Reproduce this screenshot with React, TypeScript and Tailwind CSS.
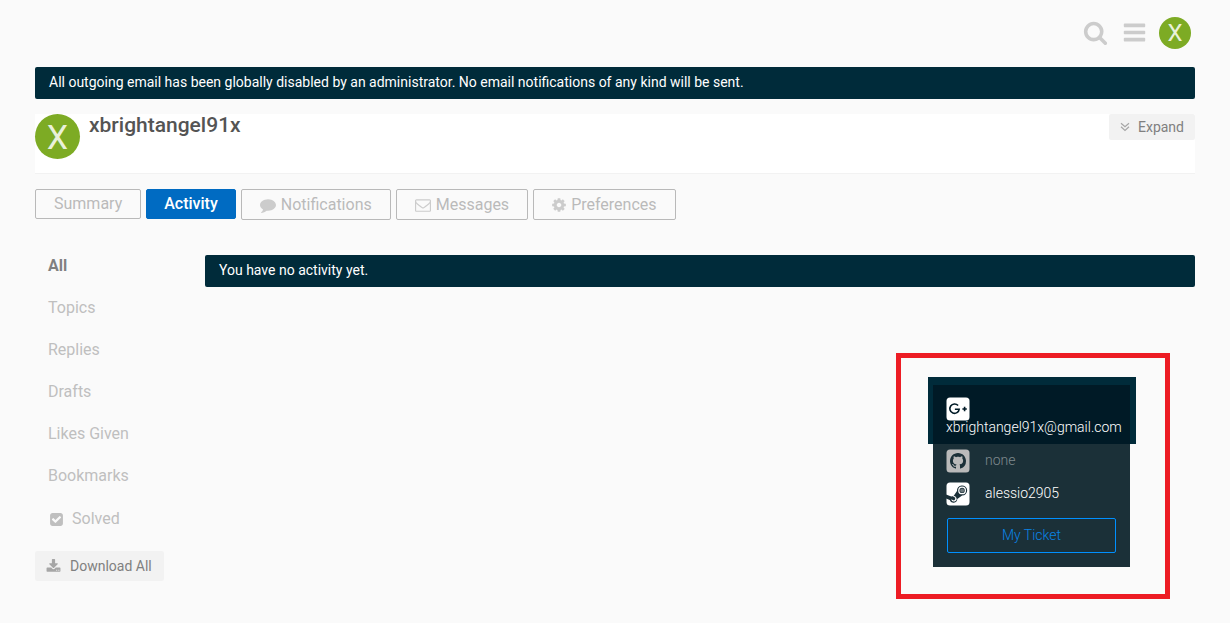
import React from "react";

const paths = {
  search: "M1216 832q0-185-131.5-316.5t-316.5-131.5-316.5 131.5-131.5 316.5 131.5 316.5 316.5 131.5 316.5-131.5 131.5-316.5zm512 832q0 52-38 90t-90 38q-54 0-90-38l-343-342q-179 124-399 124-143 0-273.5-55.5t-225-150-150-225-55.5-273.5 55.5-273.5 150-225 225-150 273.5-55.5 273.5 55.5 225 150 150 225 55.5 273.5q0 220-124 399l343 343q37 37 37 90z",
  bars: "M1664 1344v128q0 26-19 45t-45 19h-1408q-26 0-45-19t-19-45v-128q0-26 19-45t45-19h1408q26 0 45 19t19 45zm0-512v128q0 26-19 45t-45 19h-1408q-26 0-45-19t-19-45v-128q0-26 19-45t45-19h1408q26 0 45 19t19 45zm0-512v128q0 26-19 45t-45 19h-1408q-26 0-45-19t-19-45v-128q0-26 19-45t45-19h1408q26 0 45 19t19 45z",
  comment: "M1792 896q0 174-120 321.5t-326 233-450 85.5q-70 0-145-8-198 175-460 242-49 14-114 22-17 2-30.5-9t-17.5-29v-1q-3-4-.5-12t2-10 4.5-9.5l6-9 7-8.5 8-9q7-8 31-34.5t34.5-38 31-39.5 32.5-51 27-59 26-76q-157-89-247.5-220t-90.5-281q0-130 71-248.5t191-204.5 286-136.5 348-50.5q244 0 450 85.5t326 233 120 321.5z",
  envelope: "M1664 1504v-768q-32 36-69 66-268 206-426 338-51 43-83 67t-86.5 48.5-102.5 24.5h-2q-48 0-102.5-24.5t-86.5-48.5-83-67q-158-132-426-338-37-30-69-66v768q0 13 9.5 22.5t22.5 9.5h1472q13 0 22.5-9.5t9.5-22.5zm0-1051v-24.5l-.5-13-3-12.5-5.5-9-9-7.5-14-2.5h-1472q-13 0-22.5 9.5t-9.5 22.5q0 168 147 284 193 152 401 317 6 5 35 29.5t46 37.5 44.5 31.5 50.5 27.5 43 9h2q20 0 43-9t50.5-27.5 44.5-31.5 46-37.5 35-29.5q208-165 401-317 54-43 100.5-115.5t46.5-131.5zm128-37v1088q0 66-47 113t-113 47h-1472q-66 0-113-47t-47-113v-1088q0-66 47-113t113-47h1472q66 0 113 47t47 113z",
  cog: "M1152 896q0-106-75-181t-181-75-181 75-75 181 75 181 181 75 181-75 75-181zm512-109v222q0 12-8 23t-20 13l-185 28q-19 54-39 91 35 50 107 138 10 12 10 25t-9 23q-27 37-99 108t-94 71q-12 0-26-9l-138-108q-44 23-91 38-16 136-29 186-7 28-36 28h-222q-14 0-24.5-8.5t-11.5-21.5l-28-184q-49-16-90-37l-141 107q-10 9-25 9-14 0-25-11-126-114-165-168-7-10-7-23 0-12 8-23 15-21 51-66.5t54-70.5q-27-50-41-99l-183-27q-13-2-21-12.5t-8-23.5v-222q0-12 8-23t19-13l186-28q14-46 39-92-40-57-107-138-10-12-10-24 0-10 9-23 26-36 98.5-107.5t94.5-71.5q13 0 26 10l138 107q44-23 91-38 16-136 29-186 7-28 36-28h222q14 0 24.5 8.5t11.5 21.5l28 184q49 16 90 37l142-107q9-9 24-9 13 0 25 10 129 119 165 170 7 8 7 22 0 12-8 23-15 21-51 66.5t-54 70.5q26 50 41 98l183 28q13 2 21 12.5t8 23.5z",
  check: "M813 1299l614-614q19-19 19-45t-19-45l-102-102q-19-19-45-19t-45 19l-467 467-211-211q-19-19-45-19t-45 19l-102 102q-19 19-19 45t19 45l358 358q19 19 45 19t45-19zm851-883v960q0 119-84.5 203.5t-203.5 84.5h-960q-119 0-203.5-84.5t-84.5-203.5v-960q0-119 84.5-203.5t203.5-84.5h960q119 0 203.5 84.5t84.5 203.5z",
  download: "M1344 1344q0-26-19-45t-45-19-45 19-19 45 19 45 45 19 45-19 19-45zm256 0q0-26-19-45t-45-19-45 19-19 45 19 45 45 19 45-19 19-45zm128-224v320q0 40-28 68t-68 28h-1472q-40 0-68-28t-28-68v-320q0-40 28-68t68-28h465l135 136q58 56 136 56t136-56l136-136h464q40 0 68 28t28 68zm-325-569q17 41-14 70l-448 448q-18 19-45 19t-45-19l-448-448q-31-29-14-70 17-39 59-39h256v-448q0-26 19-45t45-19h256q26 0 45 19t19 45v448h256q42 0 59 39z"
};

interface IconProps {
  name: keyof typeof paths;
  size: number;
  className?: string;
}
const Icon: React.FC<IconProps> = ({
  name,
  size,
  className
}) => <svg width={size} height={size} viewBox="0 0 1792 1792" fill="currentColor" overflow="visible" aria-hidden="true" className={className}>
    <path d={paths[name]} />
  </svg>;

const GooglePlusIcon = () => <svg width={24} height={24} viewBox="0 0 24 24" aria-hidden="true">
    <rect x="0.5" y="0.5" width="23" height="23" rx="3.5" fill="#fff" />
    <path d="M12.1 8.6A4.7 4.7 0 1 0 13.2 12.2H8.9M16.4 12h4.4M18.6 9.8v4.4" fill="none" stroke="#001a26" strokeWidth="1.6" />
  </svg>;

const GithubIcon = () => <svg width={24} height={24} viewBox="0 0 24 24" aria-hidden="true">
    <rect x="0.5" y="0.5" width="23" height="23" rx="3.5" fill="#bababa" />
    <path transform="translate(4 4)" fill="#1b3038" d="M8 0C3.58 0 0 3.58 0 8c0 3.54 2.29 6.53 5.47 7.59.4.07.55-.17.55-.38 0-.19-.01-.82-.01-1.49-2.01.37-2.53-.49-2.69-.94-.09-.23-.48-.94-.82-1.13-.28-.15-.68-.52-.01-.53.63-.01 1.08.58 1.23.82.72 1.21 1.87.87 2.33.66.07-.52.28-.87.51-1.07-1.78-.2-3.64-.89-3.64-3.95 0-.87.31-1.59.82-2.15-.08-.2-.36-1.02.08-2.12 0 0 .67-.21 2.2.82.64-.18 1.32-.27 2-.27s1.36.09 2 .27c1.53-1.04 2.2-.82 2.2-.82.44 1.1.16 1.92.08 2.12.51.56.82 1.27.82 2.15 0 3.07-1.87 3.75-3.65 3.95.29.25.54.73.54 1.48 0 1.07-.01 1.93-.01 2.2 0 .21.15.46.55.38A8.01 8.01 0 0 0 16 8c0-4.42-3.58-8-8-8z" />
  </svg>;

const SteamIcon = () => <svg width={24} height={24} viewBox="0 0 24 24" aria-hidden="true">
    <rect x="0.5" y="0.5" width="23" height="23" rx="3.5" fill="#fff" />
    <path d="M0 12.4l5.3 2.2a3.9 3.9 0 0 1 2.3-.6l3.4-4.9a5.1 5.1 0 1 1 5.1 4.5l-4.8 3.5a3.9 3.9 0 0 1-7.6 1L0 16.5z" fill="#1b3038" />
    <circle cx="16.1" cy="8.4" r="3.3" fill="none" stroke="#fff" strokeWidth="1.3" />
    <circle cx="16.1" cy="8.4" r="2" fill="#6d797d" />
    <path d="M5.2 17.3l1.6.7a1.6 1.6 0 1 0 1.2-2.9l-1.5-.6a2.7 2.7 0 1 1-1.3 2.8z" fill="#fff" />
  </svg>;

const tabs: { label: string; icon?: keyof typeof paths }[] = [
  { label: "Summary" },
  { label: "Activity" },
  { label: "Notifications", icon: "comment" },
  { label: "Messages", icon: "envelope" },
  { label: "Preferences", icon: "cog" }
];

const filters = ["All", "Topics", "Replies", "Drafts", "Likes Given", "Bookmarks"];

interface AlertProps {
  children: React.ReactNode;
}
const Alert: React.FC<AlertProps> = ({ children }) => <div className="rounded-[2px] bg-[#002b3a] px-[14px] pb-0.5 text-sm leading-[30px] text-white">
    {children}
  </div>;

const Header = () => <header className="flex items-center justify-end h-[65px] mb-0.5 pr-1">
    <button aria-label="Search" className="mr-[14px] text-[#cccccc]"><Icon name="search" size={25} /></button>
    <button aria-label="Menu" className="mr-3 text-[#cccccc]"><Icon name="bars" size={25} /></button>
    <button aria-label="Account" className="size-8 rounded-full bg-[#7dab24] text-[#e9f1da] text-[24px] leading-8">X</button>
  </header>;

const Profile = () => <section className="flex items-start mt-[15px] h-[60px] bg-white border-b border-[#f2f2f2]">
    <div className="size-[45px] rounded-full bg-[#7dab24] text-[#e9f1da] text-[34px] leading-[46px] text-center">X</div>
    <h1 className="ml-[9px] text-[21px] leading-[22px] font-medium text-[#545454]">xbrightangel91x</h1>
    <button className="ml-auto flex items-center h-[26px] rounded-[2px] bg-[#f2f2f2] px-[11px] text-sm text-[#808080]">
      <svg width={10} height={10} viewBox="0 0 10 10" fill="none" stroke="#a6a6a6" strokeWidth="1.2" aria-hidden="true" className="mr-2">
        <path d="M1 1.2l4 3.6 4-3.6M1 4.8l4 3.6 4-3.6" />
      </svg>
      Expand
    </button>
  </section>;

const Tabs = () => <nav className="flex items-start gap-[5px] mt-[15px]">
    {tabs.map(tab => <a key={tab.label} href="#" className={`flex items-center rounded-[2px] border text-base ${tab.icon ? "h-[31px] pt-px" : "h-[30px]"} ${tab.label === "Activity" ? "px-[17px] bg-[#006bc2] border-[#006bc2] text-white font-medium" : "px-[18px] border-[#b9b9b9] text-[#bababa]"}`}>
        {tab.icon && <Icon name={tab.icon} size={16} className={`text-[#cccccc] ${tab.icon === "cog" ? "-ml-px mr-1" : "mr-[5px]"}`} />}
        {tab.label}
      </a>)}
  </nav>;

const Sidebar = () => <aside className="w-[170px] shrink-0">
    <ul className="text-base text-[#bfbfbf]">
      {filters.map(item => <li key={item}>
          <a href="#" className={`flex items-center h-[42px] pl-[13px] ${item === "All" ? "font-bold text-[#808080]" : ""}`}>{item}</a>
        </li>)}
      <li>
        <a href="#" className="flex items-center h-[44px] pl-[14px]">
          <Icon name="check" size={15} className="mr-2" />
          Solved
        </a>
      </li>
    </ul>
    <button className="mt-[10px] flex items-center h-[30px] rounded-[2px] bg-[#f2f2f2] pl-[11px] pr-3 text-sm text-[#808080]">
      <Icon name="download" size={15} className="mr-[9px] text-[#a6a6a6]" />
      Download All
    </button>
  </aside>;

// linked accounts, the first row is highlighted by a wider band
const AccountCard = () => <div className="w-[274px] h-[246px] mt-[66px] ml-auto mr-[25px] border-[5px] border-[#ed1c24] pt-[19px] pl-[27px] text-sm">
    <div className="w-[208px] h-[67px] bg-[#002b3a] pt-2 pl-[5px] pr-[6px]">
      <div className="h-[59px] bg-[#001a26] pt-3 pl-[13px] text-white font-light">
        <GooglePlusIcon />
        <p className="leading-3">xbrightangel91x@gmail.com</p>
      </div>
    </div>
    <div className="w-[197px] h-[123px] ml-[5px] bg-[#1b3038] pl-[13px] pr-[14px] pt-[5px] font-light">
      <div className="flex items-center h-6 text-[#7f8a8e]"><GithubIcon /><span className="ml-[15px] pb-0.5">none</span></div>
      <div className="flex items-center h-6 mt-[9px] text-white"><SteamIcon /><span className="ml-[15px] pb-0.5">alessio2905</span></div>
      <div className="pl-px mt-3">
        <button className="w-full h-[35px] rounded-[2px] border border-solid border-[#0090ff] pb-0.5 text-[#0a84e6]">My Ticket</button>
      </div>
    </div>
  </div>;

export default function App() {
  return <div className="min-h-screen bg-[#fafafa] px-[35px] pb-6 font-[Roboto,sans-serif]">
      <Header />
      <Alert>All outgoing email has been globally disabled by an administrator. No email notifications of any kind will be sent.</Alert>
      <Profile />
      <Tabs />
      <div className="flex items-start mt-[25px]">
        <Sidebar />
        <main className="flex-1 pt-[10px]">
          <Alert>You have no activity yet.</Alert>
          <AccountCard />
        </main>
      </div>
    </div>;
}
